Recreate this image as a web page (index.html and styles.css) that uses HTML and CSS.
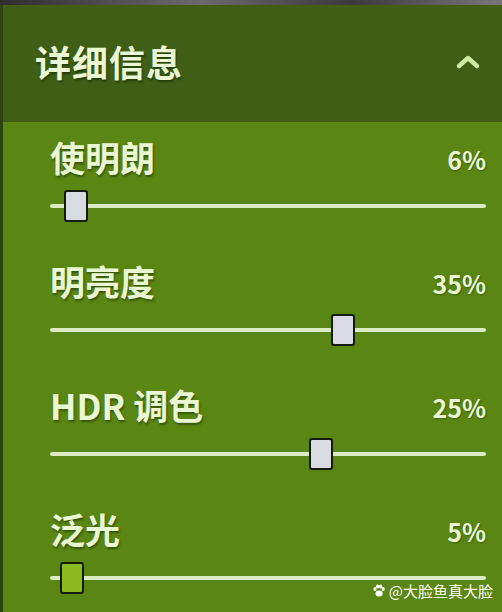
FILE: index.html
```html
<!DOCTYPE html>
<html lang="zh-CN">
<head>
  <meta charset="UTF-8" />
  <title>详细信息</title>
  <link rel="stylesheet" href="styles.css">
</head>
<body>
  <div class="topbar"></div>
  <div class="panel">
    <div class="header">
      <h1 class="titulo">详细信息</h1>
      <svg class="chevron" width="28" height="18" viewBox="0 0 28 18">
        <path d="M5 13 L14 5 L23 13" fill="none" stroke="#cfeaa4" stroke-width="4.5" stroke-linecap="round" stroke-linejoin="round"/>
      </svg>
    </div>

    <div class="rows">
      <div class="row">
        <div class="linha">
          <span class="nome">使明朗</span>
          <span class="valor">6%</span>
        </div>
        <div class="slider">
          <div class="track"></div>
          <div class="thumb" style="left:14px"></div>
        </div>
      </div>

      <div class="row">
        <div class="linha">
          <span class="nome">明亮度</span>
          <span class="valor">35%</span>
        </div>
        <div class="slider">
          <div class="track"></div>
          <div class="thumb" style="left:281px"></div>
        </div>
      </div>

      <div class="row">
        <div class="linha">
          <span class="nome">HDR 调色</span>
          <span class="valor">25%</span>
        </div>
        <div class="slider">
          <div class="track"></div>
          <div class="thumb" style="left:259px"></div>
        </div>
      </div>

      <div class="row">
        <div class="linha">
          <span class="nome">泛光</span>
          <span class="valor">5%</span>
        </div>
        <div class="slider">
          <div class="track"></div>
          <div class="thumb ativo" style="left:10px"></div>
        </div>
      </div>
    </div>

    <div class="marca">
      <svg width="14" height="14" viewBox="0 0 14 14">
        <ellipse cx="3" cy="5" rx="1.6" ry="2" fill="#fff"/>
        <ellipse cx="5.6" cy="2.4" rx="1.6" ry="2" fill="#fff"/>
        <ellipse cx="8.6" cy="2.4" rx="1.6" ry="2" fill="#fff"/>
        <ellipse cx="11.2" cy="5" rx="1.6" ry="2" fill="#fff"/>
        <ellipse cx="7.1" cy="9.6" rx="3.6" ry="3" fill="#fff"/>
      </svg>
      <span>@大脸鱼真大脸</span>
    </div>
  </div>
</body>
</html>
```

FILE: styles.css
```css
body {
  margin: 0;
  width: 502px;
  height: 612px;
  overflow: hidden;
  background-color: #5a8614;
  font-family: 'Noto Sans CJK SC', 'Noto Sans', sans-serif;
  color: #e9f7d2;
}

.topbar {
  height: 5px;
  background: linear-gradient(to right, #2e2e2e, #6a6a6a 40%, #3a3a3a 70%, #777);
}

.panel {
  position: relative;
  height: 607px;
  border-left: 3px solid #2d4210;
  box-sizing: border-box;
}

.header {
  height: 117px;
  background-color: #3f5f16;
  display: flex;
  align-items: center;
  justify-content: space-between;
  padding: 0 20px 0 32px;
  box-sizing: border-box;
}

.titulo {
  margin: 0;
  font-size: 36px;
  font-weight: bold;
  letter-spacing: 1px;
  text-shadow: 1px 2px 2px rgba(20, 40, 0, 0.6);
  line-height: 1;
  margin-top: -6px;
}

.chevron {
  margin-top: -4px;
}

.row {
  height: 124px;
  padding: 14px 16px 0 47px;
  box-sizing: border-box;
}

.linha {
  height: 40px;
  display: flex;
  align-items: center;
  justify-content: space-between;
  margin-bottom: 14px;
}

.nome {
  font-size: 35px;
  font-weight: bold;
  text-shadow: 1px 2px 2px rgba(20, 40, 0, 0.5);
}

.valor {
  font-size: 25px;
  font-weight: bold;
  margin-top: 6px;
  text-shadow: 1px 1px 2px rgba(20, 40, 0, 0.4);
}

.slider {
  position: relative;
  height: 32px;
  display: flex;
  align-items: center;
}

.track {
  width: 100%;
  height: 4px;
  background-color: #dbebc4;
  border-radius: 2px;
}

.thumb {
  position: absolute;
  top: 0;
  width: 20px;
  height: 28px;
  border: 2px solid #141a0c;
  border-radius: 3px;
  background-color: #d8dbe2;
}

.thumb.ativo {
  background-color: #8bbb1c;
}

.marca {
  position: absolute;
  right: 9px;
  bottom: 11px;
  display: flex;
  align-items: center;
  gap: 3px;
  font-size: 15px;
  color: #fff;
}
```
